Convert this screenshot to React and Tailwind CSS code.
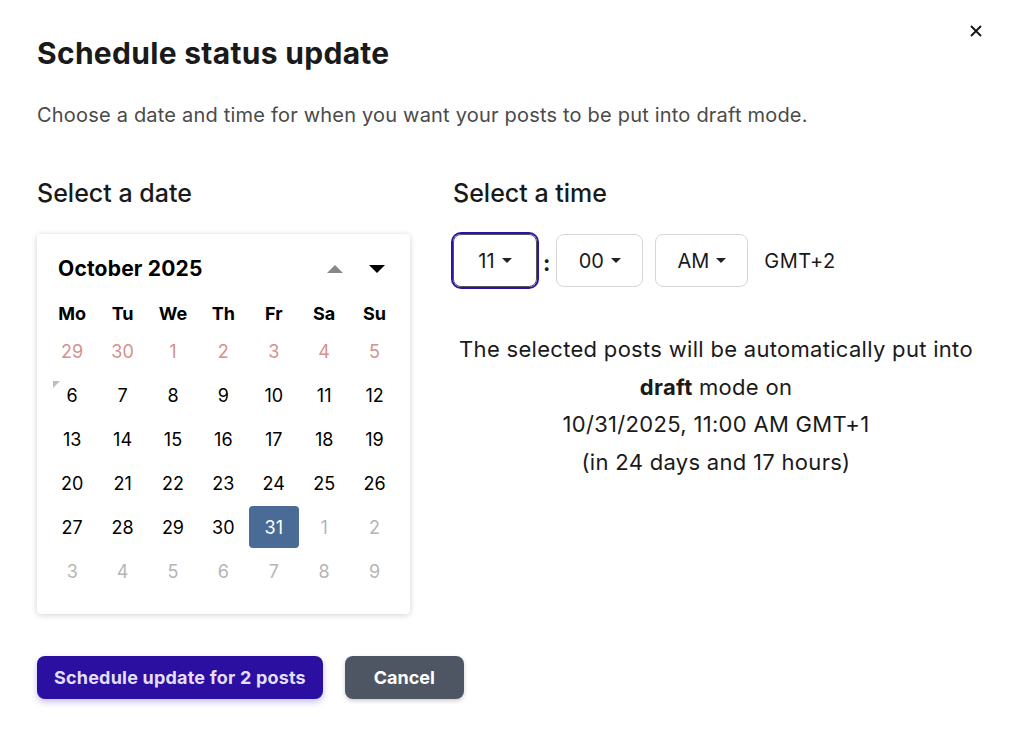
import React from "react";

const font = { fontFamily: "Inter, 'Noto Sans', sans-serif" };

function Caret() {
  return (
    <svg width="10" height="6" viewBox="0 0 10 6" className="ml-[7px]">
      <path d="M0 0 L10 0 L5 5 Z" fill="#222" />
    </svg>
  );
}

export default function App() {
  const weeks = [
    [["29", "p"], ["30", "p"], ["1", "p"], ["2", "p"], ["3", "p"], ["4", "p"], ["5", "p"]],
    [["6", "t"], ["7"], ["8"], ["9"], ["10"], ["11"], ["12"]],
    [["13"], ["14"], ["15"], ["16"], ["17"], ["18"], ["19"]],
    [["20"], ["21"], ["22"], ["23"], ["24"], ["25"], ["26"]],
    [["27"], ["28"], ["29"], ["30"], ["31", "s"], ["1", "n"], ["2", "n"]],
    [["3", "n"], ["4", "n"], ["5", "n"], ["6", "n"], ["7", "n"], ["8", "n"], ["9", "n"]],
  ];
  const days = ["Mo", "Tu", "We", "Th", "Fr", "Sa", "Su"];
  return (
    <div
      className="w-[1012px] h-[734px] bg-white relative text-[#1a1a1a] pl-[37px] pt-[35px]"
      style={font}
    >
      <button className="absolute right-[26px] top-[21px] w-[20px] h-[20px] flex items-center justify-center">
        <svg width="14" height="14" viewBox="0 0 14 14">
          <path d="M2 2 L12 12 M12 2 L2 12" stroke="#111" strokeWidth="1.8" />
        </svg>
      </button>
      <h1 className="text-[30px] font-bold leading-[36px] tracking-[0.3px] text-[#1a1a1a]">
        Schedule status update
      </h1>
      <p className="mt-[30px] text-[20px] leading-[28px] tracking-[0.2px] text-[#4a4a4a]">
        Choose a date and time for when you want your posts to be put into draft mode.
      </p>
      <div className="flex mt-[48px]">
        <div className="w-[416px]">
          <h2 className="text-[25px] font-medium leading-[32px] text-[#1a1a1a]">Select a date</h2>
          <div className="mt-[25px] w-[373px] h-[380px] rounded-[4px] bg-white shadow-[0_1px_6px_rgba(0,0,0,0.18)] pt-[21px] pl-[10px]">
            <div className="flex items-center h-[28px] pl-[11px] pr-[25px]">
              <span className="text-[21px] font-bold tracking-[0.2px] text-black">October 2025</span>
              <div className="ml-auto flex items-center gap-[26px]">
                <svg width="16" height="10" viewBox="0 0 16 10">
                  <path d="M0 9 L16 9 L8 1 Z" fill="#888" />
                </svg>
                <svg width="16" height="10" viewBox="0 0 16 10">
                  <path d="M0 1 L16 1 L8 9 Z" fill="#000" />
                </svg>
              </div>
            </div>
            <div className="grid grid-cols-[repeat(7,50.4px)] mt-[16px]">
              {days.map((d) => (
                <div key={d} className="h-[28px] flex items-center justify-center text-[18px] font-bold text-black">
                  {d}
                </div>
              ))}
            </div>
            <div className="mt-[2px]">
              {weeks.map((w, i) => (
                <div key={i} className="grid grid-cols-[repeat(7,50.4px)] h-[44px]">
                  {w.map(([n, k], j) => {
                    let cls = "text-black";
                    if (k === "p") cls = "text-[#d4918d]";
                    if (k === "n") cls = "text-[#b5b5b5]";
                    if (k === "s") cls = "text-white bg-[#4a6b96] rounded-[4px]";
                    return (
                      <div key={j} className="flex items-center justify-center py-[1px]">
                        <div className={`relative w-[50px] h-[42px] flex items-center justify-center text-[18px] ${cls}`}>
                          {k === "t" && (
                            <span className="absolute left-[6px] top-[7px] w-0 h-0 border-t-[7px] border-t-[#bdbdbd] border-r-[7px] border-r-transparent" />
                          )}
                          {n}
                        </div>
                      </div>
                    );
                  })}
                </div>
              ))}
            </div>
          </div>
        </div>
        <div className="flex-1 pr-[37px]">
          <h2 className="text-[25px] font-medium leading-[32px] text-[#1a1a1a]">Select a time</h2>
          <div className="mt-[25px] flex items-center">
            <div className="w-[84px] h-[53px] rounded-[8px] border border-[#555] ring-2 ring-[#2a14a8] flex items-center justify-center text-[20px] text-[#1a1a1a]">
              11<Caret />
            </div>
            <span className="mx-[6px] text-[22px] font-bold text-[#1a1a1a] leading-none pt-[4px]">:</span>
            <div className="w-[87px] h-[53px] rounded-[8px] border border-[#d6d6d6] flex items-center justify-center text-[20px] text-[#1a1a1a]">
              00<Caret />
            </div>
            <div className="ml-[12px] w-[93px] h-[53px] rounded-[8px] border border-[#d6d6d6] flex items-center justify-center text-[20px] text-[#1a1a1a]">
              AM<Caret />
            </div>
            <span className="ml-[16px] text-[20px] tracking-[0.4px] text-[#1a1a1a]">GMT+2</span>
          </div>
          <div className="mt-[44px] text-center text-[22px] leading-[37.5px] tracking-[0.3px] text-[#1a1a1a] pl-[4px]">
            <div>The selected posts will be automatically put into</div>
            <div>
              <b className="font-bold">draft</b> mode on
            </div>
            <div>10/31/2025, 11:00 AM GMT+1</div>
            <div>(in 24 days and 17 hours)</div>
          </div>
        </div>
      </div>
      <div className="flex mt-[42px] gap-[22px]">
        <button className="h-[43px] px-[17px] rounded-[8px] bg-[#2a0fa0] text-[#e4defb] text-[18px] font-bold tracking-[0.2px] shadow-[0_3px_6px_rgba(70,40,200,0.3)]">
          Schedule update for 2 posts
        </button>
        <button className="h-[43px] w-[119px] rounded-[8px] bg-[#4e5563] text-white text-[18px] font-bold shadow-[0_2px_4px_rgba(0,0,0,0.2)]">
          Cancel
        </button>
      </div>
    </div>
  );
}
